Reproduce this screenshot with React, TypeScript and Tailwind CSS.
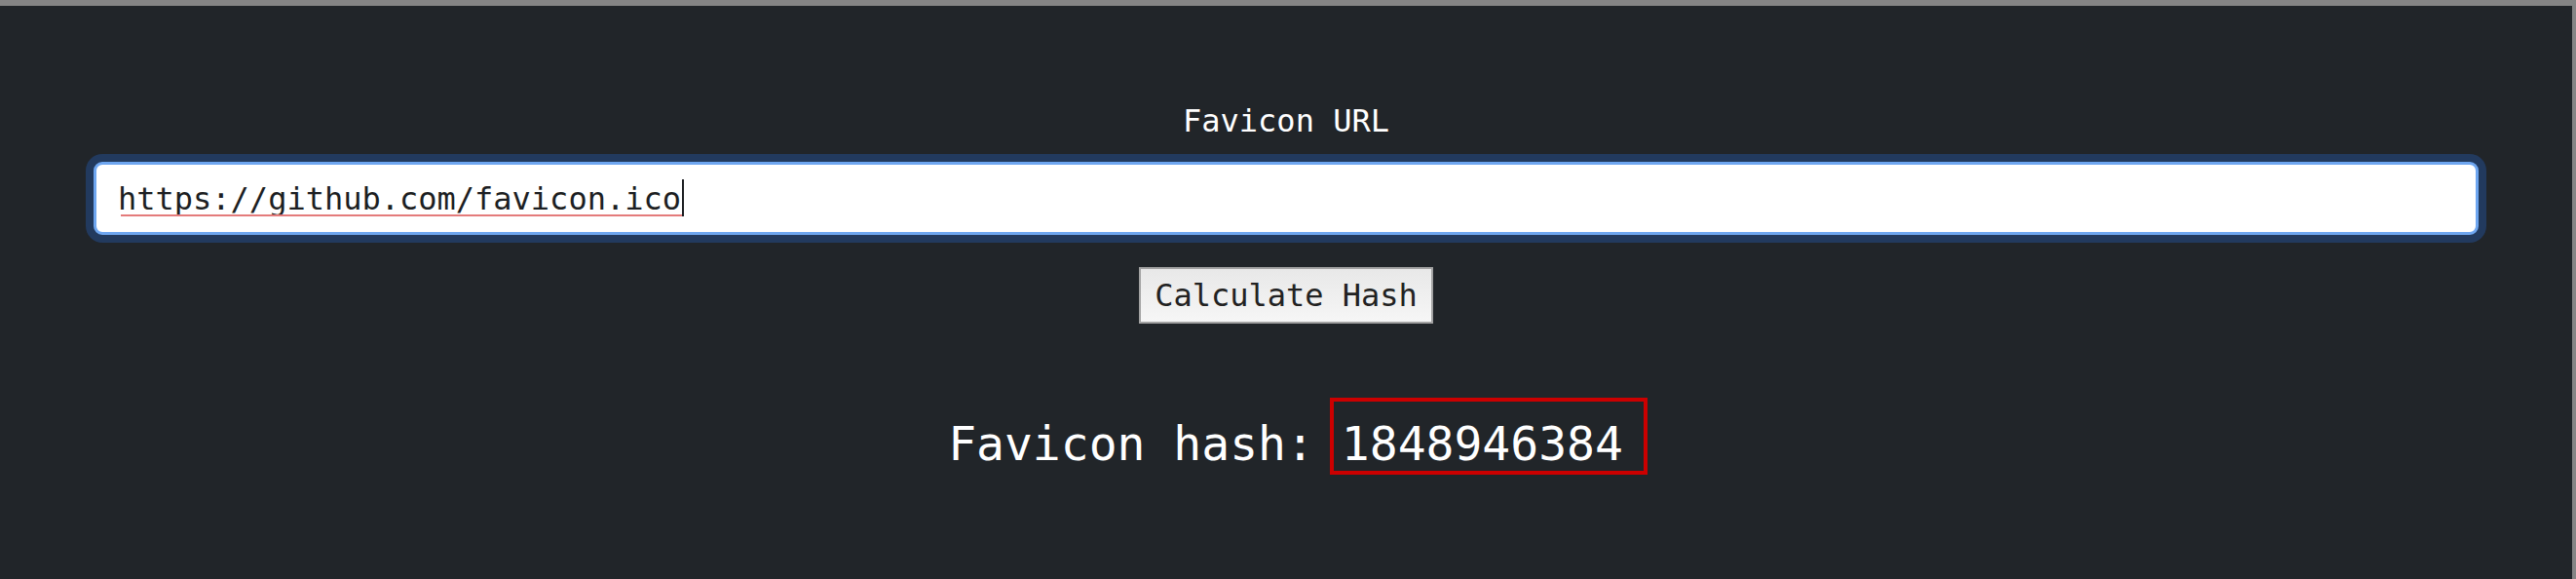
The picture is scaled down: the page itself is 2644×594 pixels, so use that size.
import { useState } from "react";

const mono = "font-['DejaVu_Sans_Mono','Liberation_Mono',monospace]";

export default function App() {
  const [url, setUrl] = useState("https://github.com/favicon.ico");

  return (
    <div className="h-[594px] bg-[#858585] pt-[6px] pr-[4px]">
      <div className={`h-full bg-[#212529] text-white ${mono} flex flex-col items-center pt-[100px]`}>
        {/* Label */}
        <label htmlFor="favicon-url" className="text-[32px] leading-[37px]">
          Favicon URL
        </label>

        {/* URL input with focus ring */}
        <div className="relative w-full px-[96px] mt-[23px]">
          <input
            id="favicon-url"
            value={url}
            onChange={(e) => setUrl(e.target.value)}
            spellCheck={false}
            className={`w-full h-[75px] bg-white text-[#1d1f23] text-[32px] leading-[37px] pl-[22px] pr-4 rounded-[9px] border-[3px] border-[#6ea6f0] ring-8 ring-[#223a5e] outline-none ${mono}`}
          />
          {/* spell-check squiggle + caret */}
          <span className="absolute left-[124px] top-[54px] w-[576px] h-[2px] bg-[#e47b7b]" />
          <span className="absolute left-[700px] top-[18px] w-[2px] h-[38px] bg-[#1d1f23]" />
        </div>

        {/* Button */}
        <button
          type="button"
          className={`mt-[33px] h-[58px] px-[14px] border-2 border-[#a3a3a3] bg-gradient-to-b from-[#e8e8e8] to-[#f6f6f6] text-[#222] text-[32px] leading-[37px] ${mono}`}
        >
          Calculate Hash
        </button>

        {/* Result */}
        <div className="mt-[76px] ml-[24px] flex items-baseline gap-[16px] text-[48px] leading-none">
          <span>Favicon hash:</span>
          <span className="inline-block border-4 border-[#cc0000] pl-[8px] pr-[21px] pt-[19px] pb-[4px]">
            1848946384
          </span>
        </div>
      </div>
    </div>
  );
}
